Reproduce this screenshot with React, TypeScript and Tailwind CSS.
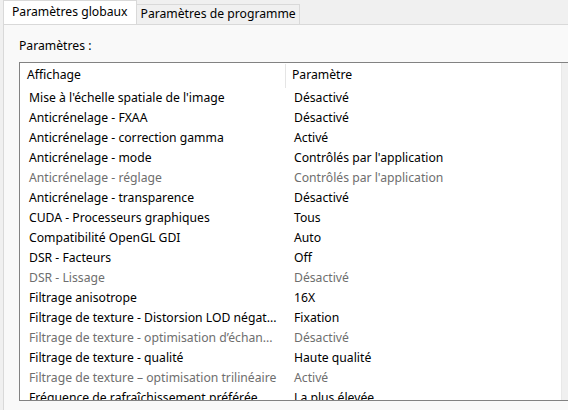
import React from 'react';

type Row = { name: string; value: string; disabled?: boolean };

const rows: Row[] = [
  { name: "Mise à l'échelle spatiale de l'image", value: 'Désactivé' },
  { name: 'Anticrénelage - FXAA', value: 'Désactivé' },
  { name: 'Anticrénelage - correction gamma', value: 'Activé' },
  { name: 'Anticrénelage - mode', value: "Contrôlés par l'application" },
  { name: 'Anticrénelage - réglage', value: "Contrôlés par l'application", disabled: true },
  { name: 'Anticrénelage - transparence', value: 'Désactivé' },
  { name: 'CUDA - Processeurs graphiques', value: 'Tous' },
  { name: 'Compatibilité OpenGL GDI', value: 'Auto' },
  { name: 'DSR - Facteurs', value: 'Off' },
  { name: 'DSR - Lissage', value: 'Désactivé', disabled: true },
  { name: 'Filtrage anisotrope', value: '16X' },
  { name: 'Filtrage de texture - Distorsion LOD négat...', value: 'Fixation' },
  { name: 'Filtrage de texture - optimisation d’échan...', value: 'Désactivé', disabled: true },
  { name: 'Filtrage de texture - qualité', value: 'Haute qualité' },
  { name: 'Filtrage de texture – optimisation trilinéaire', value: 'Activé', disabled: true },
  { name: 'Fréquence de rafraîchissement préférée', value: 'La plus élevée' },
];

export default function App() {
  return (
    <div
      className="w-[568px] h-[410px] overflow-hidden bg-[#f0f0f0] flex flex-col text-[12.2px] text-black"
      style={{ fontFamily: '"Noto Sans", "Open Sans", sans-serif' }}
    >
      {/* tabs */}
      <div className="h-[24px] flex items-end pl-[3px] shrink-0">
        <div className="h-[24px] px-[8px] flex items-center bg-white border border-b-0 border-[#d9d9d9] leading-none">
          Paramètres globaux
        </div>
        <div className="h-[20px] pl-[4px] pr-[3px] flex items-center bg-[#f0f0f0] border border-l-0 border-b-0 border-[#d9d9d9] leading-none">
          Paramètres de programme
        </div>
      </div>

      <div className="flex-1 ml-[3px] bg-[#f9f9f9] border-t border-l border-[#d9d9d9] pl-[15px] flex flex-col">
        <div className="mt-[13px] h-[16px] flex items-center">Paramètres :</div>

        <div className="mt-[8px] w-[560px] h-[339px] bg-white border border-[#828282] flex overflow-hidden shrink-0">
          <div className="flex-1 flex flex-col overflow-hidden">
            <div className="h-[25px] flex items-center shrink-0">
              <div className="w-[266px] pl-[7px] border-r border-[#e5e5e5] h-[24px] flex items-center">Affichage</div>
              <div className="pl-[6px]">Paramètre</div>
            </div>
            {rows.map((r) => (
              <div
                key={r.name}
                className={`h-[20px] flex items-center shrink-0 ${r.disabled ? 'text-[#6e6e6e]' : 'text-black'}`}
              >
                <div className="w-[267px] pl-[9px] whitespace-nowrap">{r.name}</div>
                <div className="pl-[7px] whitespace-nowrap">{r.value}</div>
              </div>
            ))}
          </div>
          <div className="w-[17px] bg-[#f0f0f0] border-l border-[#e8e8e8] flex flex-col pt-[22px] shrink-0">
            <div className="w-[7px] ml-[6px] h-[142px] bg-[#858585]" />
          </div>
        </div>
      </div>
    </div>
  );
}
